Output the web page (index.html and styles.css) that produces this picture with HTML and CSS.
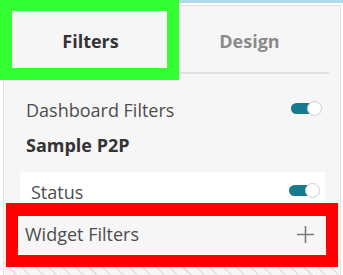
FILE: index.html
```html
<!DOCTYPE html>
<html lang="en">

<head>
    <meta charset="UTF-8">
    <meta name="viewport" content="width=device-width, initial-scale=1.0">
    <title>Filters panel</title>
    <link rel="stylesheet" href="styles.css">
</head>

<body>
    <div class="top-stripe"></div>

    <div class="panel">
        <!-- Tabs -->
        <div class="tabs">
            <div class="tab active">Filters</div>
            <div class="tab">Design</div>
        </div>

        <div class="row first">
            <span>Dashboard Filters</span>
            <span class="toggle"></span>
        </div>
        <div class="row bold">Sample P2P</div>

        <div class="card">
            <span>Status</span>
            <span class="toggle"></span>
        </div>

        <div class="row widget-row">
            <span>Widget Filters</span>
            <svg class="plus" width="19" height="19" viewBox="0 0 19 19">
                <path d="M9.5 1v17M1 9.5h17" stroke="#7a7a7a" stroke-width="1.6" fill="none" />
            </svg>
        </div>

        <div class="hatch"></div>
    </div>

    <!-- Annotation frames drawn over the screenshot -->
    <div class="mark mark-green"></div>
    <div class="mark mark-red"></div>
</body>

</html>
```

FILE: styles.css
```css
/* Basic page */
body {
    margin: 0;
    font-family: "Open Sans", "DejaVu Sans", sans-serif;
    font-size: 18px;
    background-color: #fff;
    color: #4d4d4d;
    overflow: hidden;
}

.top-stripe {
    height: 3px;
    background-color: #afdbe8;
}

.panel {
    margin: 2px 2px 0 3px;
    border: 1px solid #e2e2e2;
    border-bottom: none;
    background-color: #f6f6f6;
}

/* Tabs */
.tabs {
    display: flex;
    margin: 0 11px 0 7px;
}

.tab {
    flex: 1;
    text-align: center;
    font-weight: 700;
    line-height: 24px;
    padding: 23px 0 19px;
    color: #8a8a8a;
    border-bottom: 2px solid #e0e0e0;
}

.tab.active {
    color: #333;
    border-bottom-color: transparent;
}

/* Rows */
.row {
    display: flex;
    align-items: center;
    justify-content: space-between;
    height: 35px;
    line-height: 24px;
    padding: 0 19px 0 22px;
}

.row.first {
    margin-top: 18px;
    height: 36px;
}

.bold {
    font-weight: 700;
    color: #333;
    height: 34px;
}

.card {
    display: flex;
    align-items: center;
    justify-content: space-between;
    margin: 10px 15px 0 16px;
    padding: 0 6px 0 11px;
    height: 40px;
    line-height: 24px;
    background-color: #fff;
}

.widget-row {
    height: 44px;
    padding: 0 25px 0 21px;
}

.plus {
    display: block;
}

/* Toggle switch, switched on */
.toggle {
    position: relative;
    width: 30px;
    height: 11px;
    border-radius: 6px;
    background-color: #167b8f;
    margin-top: -3px;
}

.toggle::after {
    content: "";
    position: absolute;
    right: -1px;
    top: -2px;
    width: 13px;
    height: 13px;
    border-radius: 50%;
    background-color: #fff;
    border: 1px solid #cfcfcf;
}

.hatch {
    height: 19px;
    background: repeating-linear-gradient(45deg, #f6f6f6 0, #f6f6f6 8px, #e2e2e2 8px, #e2e2e2 9.5px);
}

/* Highlight frames */
.mark {
    position: absolute;
    box-sizing: border-box;
}

.mark-green {
    left: 0;
    top: 0;
    width: 179px;
    height: 80px;
    border: 12px solid #33ff33;
    border-top-width: 11px;
}

.mark-red {
    left: 6px;
    top: 203px;
    width: 332px;
    height: 64px;
    border: 12px solid #ff0000;
    border-top-width: 13px;
}
```
